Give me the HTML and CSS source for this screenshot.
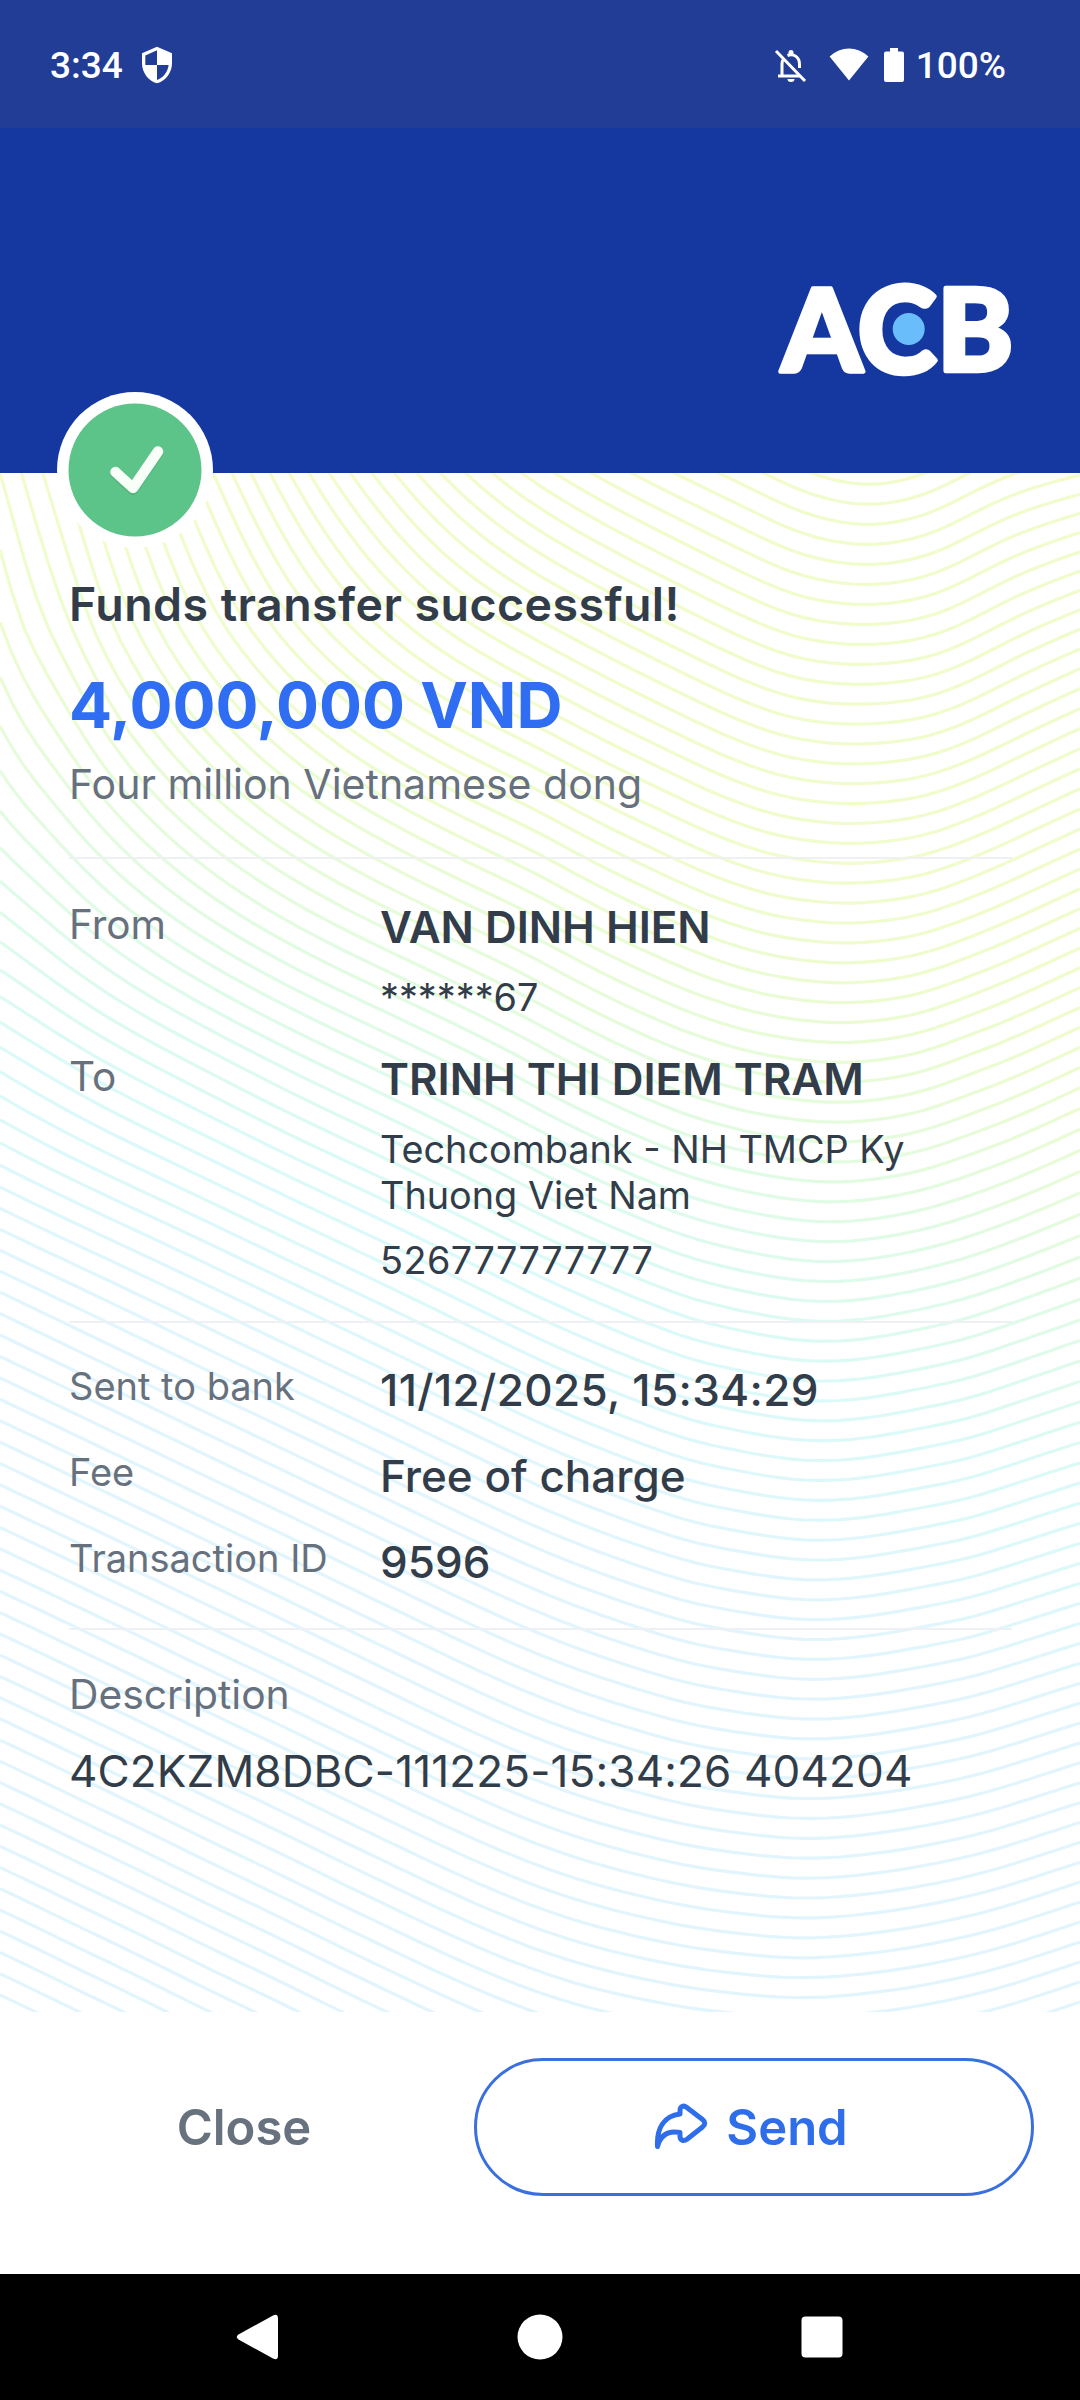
FILE: index.html
```html
<!DOCTYPE html>
<html lang="en">
<head>
<meta charset="utf-8">
<title>Funds transfer</title>
<link rel="stylesheet" href="styles.css">
</head>
<body>
<div class="screen">
  <div class="status">
    <span class="status-time">3:34</span>
    <svg class="ic-shield" viewBox="0 0 24 24"><path fill="#fff" d="M12 1 3 5v6c0 5.55 3.84 10.74 9 12 5.16-1.26 9-6.45 9-12V5l-9-4zm0 10.99h7c-.53 4.12-3.28 7.79-7 8.94V12H5V6.3l7-3.11v8.8z"/></svg>
    <span class="status-gap"></span>
    <svg class="ic-bell" viewBox="0 0 33 34">
      <g fill="none" stroke="#fff" stroke-width="3"><path d="M2 2 31 32"/><path d="M4 27h22"/><path d="M8 27V15c0-2 .4-3.600 1.400-5"/><path d="M13.500 6.500C20 4 25.500 8.500 25.500 15v4"/></g>
      <path fill="#fff" d="M14.500 6V3.500a2.500 2.500 0 0 1 5 0V6zM13.500 30h7a3.500 3 0 0 1-7 0z"/>
    </svg>
    <svg class="ic-wifi" viewBox="0 0 40 33"><path fill="#fff" d="M20 32.500.600 8.500C12-2.300 28-2.300 39.400 8.500z"/></svg>
    <svg class="ic-battery" viewBox="0 0 20 34"><path fill="#fff" d="M6 0h8v3.500h4a2 2 0 0 1 2 2V32a2 2 0 0 1-2 2H2a2 2 0 0 1-2-2V5.500a2 2 0 0 1 2-2h4z"/></svg>
    <span class="status-pct">100%</span>
  </div>

  <div class="banner">
    <svg class="logo" viewBox="0 0 236 96">
      <g class="logo-letters">
        <text x="3.500" y="88.500">A</text>
        <text class="logo-c" x="79.500" y="89.500">C</text>
        <text x="159" y="87.500">B</text>
      </g>
      <circle cx="130.700" cy="46" r="16" fill="#68bdfa"/>
    </svg>
  </div>

  <main class="receipt">
    <svg class="waves" id="waves" viewBox="0 473 1080 1539">
      <defs>
        <linearGradient id="waveTint" gradientUnits="userSpaceOnUse" x1="-178" y1="425" x2="-464" y2="1105">
          <stop offset="0" stop-color="#f0fccb"/>
          <stop offset=".15" stop-color="#edfccf"/>
          <stop offset=".42" stop-color="#e1fbe3"/>
          <stop offset=".68" stop-color="#dbfaf8"/>
          <stop offset="1" stop-color="#e2f5fd"/>
        </linearGradient>
      </defs>
    </svg>
    <svg class="badge" viewBox="0 0 156 156">
      <circle cx="78" cy="78" r="78" fill="#fff"/>
      <circle cx="78" cy="78" r="66.500" fill="#5cc389"/>
      <path d="M58.500 82 76 98 101 61" fill="none" stroke="#4aa874" stroke-opacity=".5" stroke-width="10.500" stroke-linecap="round" stroke-linejoin="round"/>
      <path d="M58.500 80 76 96 101 59.500" fill="none" stroke="#f8fff8" stroke-width="10.500" stroke-linecap="round" stroke-linejoin="round"/>
    </svg>
    <h1 class="title">Funds transfer successful!</h1>
    <div class="amount">4,000,000 VND</div>
    <div class="words">Four million Vietnamese dong</div>

    <section class="block parties">
      <div class="row">
        <div class="label">From</div>
        <div class="value">
          <div class="name">VAN DINH HIEN</div>
          <div class="detail">******67</div>
        </div>
      </div>
      <div class="row">
        <div class="label">To</div>
        <div class="value">
          <div class="name name-to">TRINH THI DIEM TRAM</div>
          <div class="detail bank">Techcombank - NH TMCP Ky Thuong Viet Nam</div>
          <div class="detail account">526777777777</div>
        </div>
      </div>
    </section>

    <section class="block meta">
      <div class="row"><div class="label">Sent to bank</div><div class="value date">11/12/2025, 15:34:29</div></div>
      <div class="row"><div class="label">Fee</div><div class="value">Free of charge</div></div>
      <div class="row"><div class="label">Transaction ID</div><div class="value">9596</div></div>
    </section>

    <section class="block note">
      <div class="note-label">Description</div>
      <div class="note-text">4C2KZM8DBC-111225-15:34:26 404204</div>
    </section>
  </main>

  <footer class="actions">
    <button class="btn-close">Close</button>
    <button class="btn-send">
      <svg class="ic-share" viewBox="0 0 54 48"><path fill="none" stroke="#2f6eea" stroke-width="5" stroke-linejoin="round" stroke-linecap="round" d="M3.500 43.500C2.500 25 10 13 26 11V7.500c0-4 3.500-5.500 6.500-3.300L48.500 16.500c3 2.300 3 5.200 0 7.500L33 36.200c-3.500 2.500-7 1-7-3V29.500C14.500 27.500 6.500 32 3.500 43.500z"/></svg>
      <span>Send</span>
    </button>
  </footer>

  <nav class="navbar">
    <svg viewBox="0 0 46 46"><path fill="#fff" d="M3.500 20.500 38 1.500q5-2.500 5 3v37q0 5.500-5 3L3.500 25.500q-3.500-2.500 0-5z"/></svg>
    <svg viewBox="0 0 46 46"><circle cx="23" cy="23" r="22.500" fill="#fff"/></svg>
    <svg viewBox="0 0 46 46"><rect x="2.500" y="2.500" width="41" height="41" rx="4" fill="#fff"/></svg>
  </nav>
</div>
<script src="waves.js"></script>
</body>
</html>
```
FILE: styles.css
```css
* { box-sizing: border-box; margin: 0; padding: 0; }

body { background: #fff; font-family: Inter, "Liberation Sans", sans-serif; }

.screen { width: 1080px; height: 2400px; display: flex; flex-direction: column; overflow: hidden; }

.status {
  height: 128px;
  padding: 4px 74px 0 50px;
  background: #213d96;
  display: flex;
  align-items: center;
  color: #fff;
  font: 500 37px/44px Roboto, sans-serif;
}
.status-gap { flex: 1; }
.ic-shield { width: 40px; height: 40px; margin: -2px 0 0 14px; }
.ic-bell { width: 33px; height: 34px; margin-right: 22px; }
.ic-wifi { width: 40px; height: 33px; margin: -4px 15px 0 0; }
.ic-battery { width: 20px; height: 34px; margin: -2px 12px 0 0; }

.banner {
  height: 345px;
  padding: 155px 66px 0 0;
  background: #1537a0;
  display: flex;
  justify-content: flex-end;
  align-items: flex-start;
}
.logo { width: 236px; height: 96px; overflow: visible; }
.logo-letters { font: 900 115px Lato, sans-serif; fill: #fff; stroke: #fff; stroke-width: 4.5px; stroke-linejoin: round; }
.logo-c { font-size: 120px; }

.receipt {
  position: relative;
  height: 1539px;
  padding: 103px 68px 0 69px;
  color: #323d49;
}
.receipt > * { position: relative; }
.receipt > .waves { position: absolute; left: 0; top: 0; width: 1080px; height: 1539px; }
.receipt > .badge { position: absolute; left: 57px; top: -81px; width: 156px; height: 156px; }

.title { font-size: 46.5px; line-height: 56px; font-weight: 600; letter-spacing: .45px; }
.amount { margin-top: 35px; font-size: 63.800px; line-height: 76px; font-weight: 700; color: #2f6df3; }
.words { margin-top: 17px; font-size: 41px; line-height: 48px; color: #67717e; }

.block { border-top: 2px solid #eef0f4; }
.row { display: grid; grid-template-columns: 311px 1fr; align-items: start; }
.label { color: #67717e; }

.parties { margin-top: 49px; padding: 42px 0 38px; display: grid; gap: 33px; }
.parties .label { font-size: 40.5px; line-height: 48px; }
.name { font-size: 43.9px; line-height: 52px; font-weight: 600; }
.detail { margin-top: 21px; font-size: 37.8px; line-height: 46px; }
.bank { max-width: 560px; }
.account { margin-top: 19px; letter-spacing: .45px; }

.meta { padding: 41px 0 40px; display: grid; gap: 34px; }
.meta .label { font-size: 38px; line-height: 44px; }
.meta .value { font-size: 44px; line-height: 52px; font-weight: 500; }
.meta .date { letter-spacing: .38px; }

.note { padding-top: 40px; }
.note-label { font-size: 40.800px; line-height: 48px; color: #67717e; }
.note-text { margin-top: 27px; font-size: 44px; line-height: 52px; letter-spacing: .15px; white-space: nowrap; }

.actions { height: 262px; padding: 46px 46px 0; display: flex; gap: 32px; background: #fff; }
.actions button {
  height: 138px;
  padding-top: 2px;
  border: 0;
  background: #fff;
  font: 600 49px/58px Inter, sans-serif;
  display: flex;
  align-items: center;
  justify-content: center;
}
.btn-close { flex: 1; color: #67727e; }
.actions .btn-send { width: 560px; padding: 2px 6px 0 0; gap: 18px; color: #2f6eea; border: 3px solid #3a70de; border-radius: 69px; }
.ic-share { width: 54px; height: 48px; margin-top: -2px; }

.navbar { height: 126px; padding: 0 235px; background: #000; display: flex; align-items: center; justify-content: space-between; }
.navbar svg { width: 46px; height: 46px; }
```
FILE: waves.js
```js
// Guilloche background: contour lines of a field sampled on horizontal sections.
// Each section lists [x, contour index] pairs at a given y.
const sections = [
  [473, [[0,32],[21.5,31],[43,30],[64,29],[213,21],[232,20],[251,19],[270,18],[289,17],[309,16],[329,15],[350,14],[372,13],[394,12],[417,11],[440,10],[465,9],[492,8],[521,7],[554,6],[591,5],[631,4],[674,3],[719,2],[764,1],[809,0],[869,-.65],[929,0],[968,1],[1015,2],[1080,2.900]]],
  [640, [[0,34.300],[27,33],[56,32],[98,30],[142,28],[187,26],[234,24],[283,22],[336,20],[394,18],[460,16],[536,14],[617,12],[703,10],[748,9],[808,8],[862,7.740],[918,8],[972,9],[1010,10],[1055,11],[1080,11.550]]],
  [858, [[0,39.300],[44,38],[102,36],[162,34],[226,32],[296,30],[374,28],[459,26],[547,24],[585,23],[628,22],[673,21],[720,20],[788,19],[848,18.700],[912,19],[972,20],[1017,21],[1060,22],[1080,22.450]]],
  [1096, [[0,48],[100,45.600],[200,43.300],[300,40.950],[400,38.700],[500,36.350],[553,35],[595,34],[640,33],[692,32],[770,31],[838,30.650],[905,31],[965,32],[1018,33],[1062,34],[1080,34.400]]],
  [1322, [[0,58.400],[100,56.150],[200,53.900],[300,51.650],[400,49.400],[500,47.100],[548,46],[595,45],[645,44],[702,43],[826,42],[954,43],[1016,44],[1074,45],[1080,45.100]]],
  [2012, [[0,90.800],[36,90],[79,89],[124,88],[167,87],[210,86],[255,85],[299,84],[342,83],[387,82],[432,81],[480,80],[534,79],[605,78],[720,77],[802,76.700],[878,77],[985,78],[1050,79],[1080,79.500]]]
];

// Monotone cubic interpolation, linear beyond both ends.
function spline(pts) {
  const n = pts.length, d = [], m = [];
  for (let i = 0; i < n - 1; i++) d.push((pts[i + 1][1] - pts[i][1]) / (pts[i + 1][0] - pts[i][0]));
  m.push(d[0]);
  for (let i = 1; i < n - 1; i++) m.push(d[i - 1] * d[i] <= 0 ? 0 : 2 * d[i - 1] * d[i] / (d[i - 1] + d[i]));
  m.push(d[n - 2]);
  return x => {
    if (x <= pts[0][0]) return pts[0][1] + m[0] * (x - pts[0][0]);
    if (x >= pts[n - 1][0]) return pts[n - 1][1] + m[n - 1] * (x - pts[n - 1][0]);
    let i = 0;
    while (x > pts[i + 1][0]) i++;
    const h = pts[i + 1][0] - pts[i][0], t = (x - pts[i][0]) / h, t2 = t * t, t3 = t2 * t;
    return (2 * t3 - 3 * t2 + 1) * pts[i][1] + (t3 - 2 * t2 + t) * h * m[i]
      + (3 * t2 - 2 * t3) * pts[i + 1][1] + (t3 - t2) * h * m[i + 1];
  };
}

const STEP = 12, COUNT = 91;

// Section values on the column grid, relaxed a little to even out the curvature.
function resample(pts) {
  const f = spline(pts);
  let v = Array.from({ length: COUNT }, (_, i) => f(i * STEP));
  for (let pass = 0; pass < 5; pass++) {
    v = v.map((c, i) => i === 0 || i === COUNT - 1 ? c : (v[i - 1] + 2 * c + v[i + 1]) / 4);
  }
  return v;
}

const rows = sections.map(([y, pts]) => [y, resample(pts)]);
const columns = [];
for (let i = 0; i < COUNT; i++) columns.push([i * STEP, spline(rows.map(([y, v]) => [v[i], y]))]);

let d = "";
for (let k = -4; k <= 94; k++) {
  let pen = false;
  for (const [x, at] of columns) {
    const y = at(k);
    if (y < 300 || y > 2200) { pen = false; continue; }
    d += (pen ? "L" : "M") + x + " " + y.toFixed(1);
    pen = true;
  }
}
const path = document.createElementNS("http://www.w3.org/2000/svg", "path");
path.setAttribute("d", d);
path.setAttribute("fill", "none");
path.setAttribute("stroke", "url(#waveTint)");
path.setAttribute("stroke-width", "3.2");
path.setAttribute("stroke-linejoin", "round");
document.getElementById("waves").appendChild(path);
```
